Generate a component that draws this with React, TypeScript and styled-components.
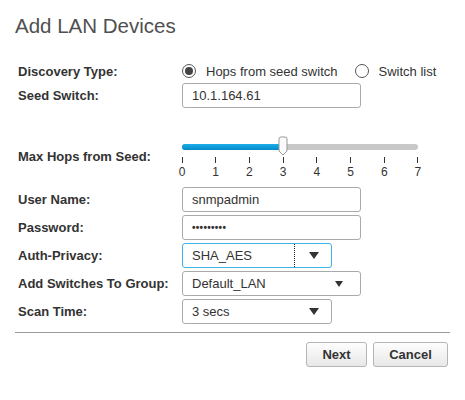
import React from "react";
import styled, { createGlobalStyle } from "styled-components";

const Global = createGlobalStyle`
  html, body { margin: 0; padding: 0; background: #fff; }
  body { font-family: "Liberation Sans", Arial, sans-serif; color: #333; }
`;

const Dialog = styled.div`
  width: 465px;
  height: 400px;
  box-sizing: border-box;
  padding: 12px 15px 0 15px;
  background: #fff;
`;

const Title = styled.h1`
  margin: 0;
  font-size: 20.5px;
  font-weight: normal;
  color: #505050;
  line-height: 27px;
  height: 50px;
`;

const Form = styled.div`
  display: flex;
  flex-direction: column;
  padding-left: 3px;
`;

const Row = styled.div<{ $h?: number; $mt?: number }>`
  display: flex;
  align-items: center;
  height: ${(p) => p.$h ?? 25}px;
  margin-top: ${(p) => p.$mt ?? 3}px;
`;

const Label = styled.div<{ $pb?: number }>`
  width: 164px;
  flex: none;
  font-weight: bold;
  font-size: 13px;
  color: #333;
  padding-bottom: ${(p) => p.$pb ?? 0}px;
`;

const RadioGroup = styled.div`
  display: flex;
  align-items: center;
  font-size: 13px;
  color: #333;
`;

const RadioCircle = styled.span<{ $checked?: boolean }>`
  width: 14px;
  height: 14px;
  box-sizing: border-box;
  border: 1px solid #555;
  border-radius: 50%;
  display: inline-flex;
  align-items: center;
  justify-content: center;
  margin-right: 10px;
  background: #fff;
  &::after {
    content: "";
    width: 8px;
    height: 8px;
    border-radius: 50%;
    background: ${(p) => (p.$checked ? "#444" : "transparent")};
  }
`;

const RadioText = styled.span<{ $mr?: number }>`
  margin-right: ${(p) => p.$mr ?? 0}px;
`;

const Input = styled.div<{ $w?: number; $focus?: boolean }>`
  width: ${(p) => p.$w ?? 179}px;
  height: 25px;
  box-sizing: border-box;
  border: 1px solid ${(p) => (p.$focus ? "#3db3e6" : "#aaa")};
  border-radius: 3px;
  padding: 0 9px;
  display: flex;
  align-items: center;
  font-size: 13px;
  color: #333;
  background: #fff;
`;

const SelText = styled.span`
  flex: 1;
`;

const Divider = styled.span`
  width: 0;
  height: 23px;
  border-left: 1px dotted #222;
  margin-right: 14px;
`;

const Arrow = styled.span<{ $small?: boolean }>`
  width: 0;
  height: 0;
  border-left: ${(p) => (p.$small ? 4.5 : 5.5)}px solid transparent;
  border-right: ${(p) => (p.$small ? 4.5 : 5.5)}px solid transparent;
  border-top: ${(p) => (p.$small ? 6 : 7)}px solid #333;
  margin-right: ${(p) => (p.$small ? 8 : 3)}px;
`;

const Password = styled.span`
  font-size: 10px;
  letter-spacing: 0.3px;
  font-weight: bold;
`;

const Slider = styled.div`
  width: 236px;
  display: flex;
  flex-direction: column;
  align-self: flex-start;
  padding-top: 7px;
`;

const Track = styled.div`
  position: relative;
  height: 6px;
  border-radius: 3px;
  background: #c8c8c8;
`;

const Fill = styled.div`
  height: 6px;
  border-radius: 3px 0 0 3px;
  background: linear-gradient(#1aaee8, #0688c8);
`;

const Thumb = styled.svg`
  position: absolute;
  top: -8px;
  margin-left: -5px;
`;

const Ticks = styled.div`
  display: flex;
  justify-content: space-between;
  margin: 7px -5px 0 -5px;
`;

const Tick = styled.div`
  width: 10px;
  display: flex;
  flex-direction: column;
  align-items: center;
  font-size: 12px;
  color: #333;
  &::before {
    content: "";
    width: 1px;
    height: 6px;
    background: #333;
    margin-bottom: 2px;
  }
`;

const Separator = styled.div`
  height: 1px;
  background: #999;
  margin-top: 8px;
  width: 435px;
`;

const Buttons = styled.div`
  display: flex;
  justify-content: flex-end;
  gap: 6px;
  margin-top: 9px;
  padding-right: 2px;
`;

const Button = styled.button<{ $w: number }>`
  width: ${(p) => p.$w}px;
  height: 25px;
  border: 1px solid #b5b5b5;
  border-radius: 3px;
  background: linear-gradient(#fdfdfd, #e8e8e8);
  font-family: "Liberation Sans", Arial, sans-serif;
  font-weight: bold;
  font-size: 13px;
  color: #333;
  padding: 0;
`;

export default function App() {
  const value = 3;
  const pct = (value / 7) * 100;
  return (
    <>
      <Global />
      <Dialog>
        <Title>Add LAN Devices</Title>
        <Form>
          <Row $h={18} $mt={0}>
            <Label>Discovery Type:</Label>
            <RadioGroup>
              <RadioCircle $checked />
              <RadioText $mr={17}>Hops from seed switch</RadioText>
              <RadioCircle />
              <RadioText>Switch list</RadioText>
            </RadioGroup>
          </Row>
          <Row>
            <Label>Seed Switch:</Label>
            <Input>10.1.164.61</Input>
          </Row>
          <Row $h={43} $mt={29}>
            <Label $pb={4}>Max Hops from Seed:</Label>
            <Slider>
              <Track>
                <Fill style={{ width: `${pct}%` }} />
                <Thumb
                  style={{ left: `${pct}%` }}
                  width="10"
                  height="20"
                  viewBox="0 0 10 20"
                >
                  <path
                    d="M1 3 Q1 1 3 1 L7 1 Q9 1 9 3 L9 15 L5 19 L1 15 Z"
                    fill="#fafafa"
                    stroke="#999"
                    strokeWidth="1"
                  />
                </Thumb>
              </Track>
              <Ticks>
                {[0, 1, 2, 3, 4, 5, 6, 7].map((n) => (
                  <Tick key={n}>{n}</Tick>
                ))}
              </Ticks>
            </Slider>
          </Row>
          <Row $mt={7}>
            <Label>User Name:</Label>
            <Input>snmpadmin</Input>
          </Row>
          <Row>
            <Label>Password:</Label>
            <Input>
              <Password>•••••••••</Password>
            </Input>
          </Row>
          <Row>
            <Label>Auth-Privacy:</Label>
            <Input $w={150} $focus>
              <SelText>SHA_AES</SelText>
              <Divider />
              <Arrow />
            </Input>
          </Row>
          <Row>
            <Label>Add Switches To Group:</Label>
            <Input>
              <SelText>Default_LAN</SelText>
              <Arrow $small />
            </Input>
          </Row>
          <Row>
            <Label>Scan Time:</Label>
            <Input $w={150}>
              <SelText>3 secs</SelText>
              <Arrow />
            </Input>
          </Row>
        </Form>
        <Separator />
        <Buttons>
          <Button $w={61}>Next</Button>
          <Button $w={75}>Cancel</Button>
        </Buttons>
      </Dialog>
    </>
  );
}
